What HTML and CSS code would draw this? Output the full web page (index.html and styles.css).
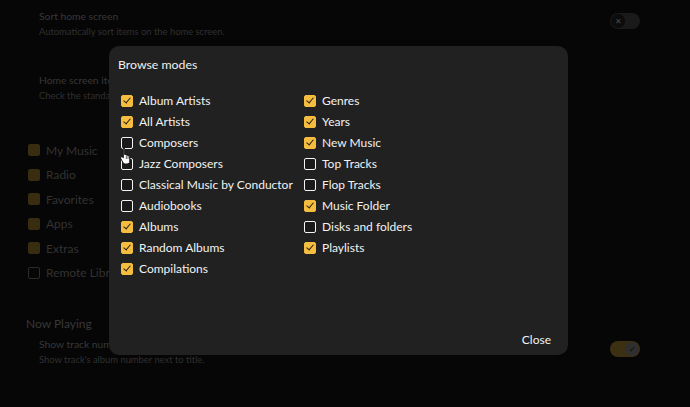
FILE: index.html
```html
<!DOCTYPE html>
<html>
<head>
<meta charset="utf-8">
<link rel="stylesheet" href="styles.css">
</head>
<body>
<div class="page">
  <div class="setting first">
    <div class="setting-text">
      <div class="s-title">Sort home screen</div>
      <div class="s-sub">Automatically sort items on the home screen.</div>
    </div>
    <div class="toggle off"><span class="knob">&#x2715;</span></div>
  </div>
  <div class="setting second">
    <div class="setting-text clipped">
      <div class="s-title">Home screen items</div>
      <div class="s-sub">Check the standard items you wish to show on the home screen.</div>
    </div>
  </div>
  <ul class="bg-list">
    <li><span class="bg-box on"></span>My Music</li>
    <li><span class="bg-box on"></span>Radio</li>
    <li><span class="bg-box on"></span>Favorites</li>
    <li><span class="bg-box on"></span>Apps</li>
    <li><span class="bg-box on"></span>Extras</li>
    <li><span class="bg-box"></span><span class="clip-label">Remote Libraries</span></li>
  </ul>
  <div class="section-head">Now Playing</div>
  <div class="setting third">
    <div class="setting-text">
      <div class="s-title clip-line">Show track number</div>
      <div class="s-sub">Show track's album number next to title.</div>
    </div>
    <div class="toggle on"><span class="knob">&#x2713;</span></div>
  </div>
</div>

<div class="dialog">
  <div class="d-title">Browse modes</div>
  <div class="d-grid">
    <div class="col">
      <div class="item"><span class="cb checked"></span>Album Artists</div>
      <div class="item"><span class="cb checked"></span>All Artists</div>
      <div class="item"><span class="cb"></span>Composers</div>
      <div class="item"><span class="cb"></span>Jazz Composers</div>
      <div class="item"><span class="cb"></span>Classical Music by Conductor</div>
      <div class="item"><span class="cb"></span>Audiobooks</div>
      <div class="item"><span class="cb checked"></span>Albums</div>
      <div class="item"><span class="cb checked"></span>Random Albums</div>
      <div class="item"><span class="cb checked"></span>Compilations</div>
    </div>
    <div class="col">
      <div class="item"><span class="cb checked"></span>Genres</div>
      <div class="item"><span class="cb checked"></span>Years</div>
      <div class="item"><span class="cb checked"></span>New Music</div>
      <div class="item"><span class="cb"></span>Top Tracks</div>
      <div class="item"><span class="cb"></span>Flop Tracks</div>
      <div class="item"><span class="cb checked"></span>Music Folder</div>
      <div class="item"><span class="cb"></span>Disks and folders</div>
      <div class="item"><span class="cb checked"></span>Playlists</div>
    </div>
  </div>
  <div class="d-actions"><span class="close-btn">Close</span></div>
</div>

<svg class="cursor" width="12" height="17" viewBox="0 0 12 17">
  <path d="M3.5 1.2c.7 0 1.2.5 1.2 1.2v5.2l.6-.1c.6-.1 1.1.2 1.3.6l.1.2c.6-.2 1.2 0 1.5.5.6-.2 1.3.1 1.5.7l.1.3v4.4c0 1.6-1.2 2.8-2.8 2.8H5.3c-.9 0-1.7-.4-2.2-1.1L.8 11.6c-.4-.5-.3-1.2.2-1.6.4-.3 1-.3 1.4 0l.9.8V2.4c0-.7.5-1.2 1.2-1.2z" fill="#fff" stroke="#000" stroke-width="0.9"/>
  <path d="M6.3 9v3M8 9.3v2.7M9.7 9.7v2.3" stroke="#000" stroke-width="0.6"/>
</svg>
</body>
</html>
```

FILE: styles.css
```css
* { box-sizing: border-box; }
html, body { margin: 0; padding: 0; }
body {
  width: 690px;
  height: 407px;
  background: #060606;
  font-family: Lato, "Open Sans", sans-serif;
  overflow: hidden;
  position: relative;
}
.page {
  display: flex;
  flex-direction: column;
  padding-top: 9px;
}
.setting {
  display: flex;
  justify-content: space-between;
  align-items: flex-start;
  padding: 0 50px 0 39px;
}
.setting-text { display: flex; flex-direction: column; }
.setting-text.clipped {
  width: 70px;
  overflow: hidden;
  white-space: nowrap;
}
.clip-label, .clip-line {
  display: block;
  width: 70px;
  overflow: hidden;
  white-space: nowrap;
}
.clip-label { width: 63px; }
.s-title {
  color: #383838;
  font-size: 10.3px;
  line-height: 15px;
}
.s-sub {
  color: #303030;
  font-size: 9.4px;
  line-height: 15px;
}
.toggle {
  width: 30px;
  height: 16px;
  border-radius: 8px;
  margin-top: 4px;
  display: flex;
  align-items: center;
  padding: 0 1px;
}
.toggle.off { background: #1a1a1a; }
.toggle.on { background: #3d3012; justify-content: flex-end; }
.knob {
  width: 14px;
  height: 14px;
  border-radius: 50%;
  font-size: 8px;
  line-height: 14px;
  text-align: center;
}
.toggle.off .knob { background: #0c0c0c; color: #4a4a4a; }
.toggle.on .knob { background: #2f2f2f; color: #151515; font-weight: bold; }
.second { margin-top: 34px; }
.bg-list {
  list-style: none;
  margin: 38px 0 0 0;
  padding: 0 0 0 28px;
  display: flex;
  flex-direction: column;
  gap: 6.5px;
}
.bg-list li {
  display: flex;
  align-items: center;
  gap: 6px;
  height: 18px;
  color: #323232;
  font-size: 12px;
}
.bg-box {
  width: 12px;
  height: 12px;
  border-radius: 2px;
  border: 1.5px solid #2c2c2c;
}
.bg-box.on { background: #382d11; border-color: #382d11; }
.section-head {
  margin: 34px 0 0 26px;
  color: #383838;
  font-size: 12px;
  line-height: 16px;
}
.third { margin-top: 5px; }
.third .toggle { margin-top: 4px; }

.dialog {
  position: absolute;
  left: 109px;
  top: 46px;
  width: 459px;
  height: 309px;
  background: #212121;
  border-radius: 10px;
  padding: 11px 17px 0 9px;
  display: flex;
  flex-direction: column;
  color: #f2f2f2;
}
.d-title {
  font-size: 12.3px;
  line-height: 16px;
  color: #f0f0f0;
}
.d-grid {
  display: grid;
  grid-template-columns: 183px 1fr;
  margin-top: 17px;
  padding-left: 3px;
}
.col { display: flex; flex-direction: column; }
.item {
  display: flex;
  align-items: center;
  gap: 6px;
  height: 21px;
  font-size: 12px;
  color: #f2f2f2;
  white-space: nowrap;
}
.cb {
  flex: none;
  width: 12px;
  height: 12px;
  border-radius: 2px;
  border: 1.6px solid #f4f4f4;
  background: #1a1a1a;
  position: relative;
}
.cb.checked {
  background: #f4bd3f;
  border-color: #f4bd3f;
}
.cb.checked::after {
  content: "";
  position: absolute;
  left: 2.5px;
  top: 0.8px;
  width: 3px;
  height: 6px;
  border-right: 1.3px solid #2a2110;
  border-bottom: 1.3px solid #2a2110;
  transform: rotate(40deg);
}
.d-actions {
  margin-top: auto;
  display: flex;
  justify-content: flex-end;
  padding-bottom: 7px;
}
.close-btn {
  font-size: 12px;
  line-height: 16px;
  color: #f2f2f2;
}
.cursor {
  position: absolute;
  left: 120px;
  top: 147px;
}
```
